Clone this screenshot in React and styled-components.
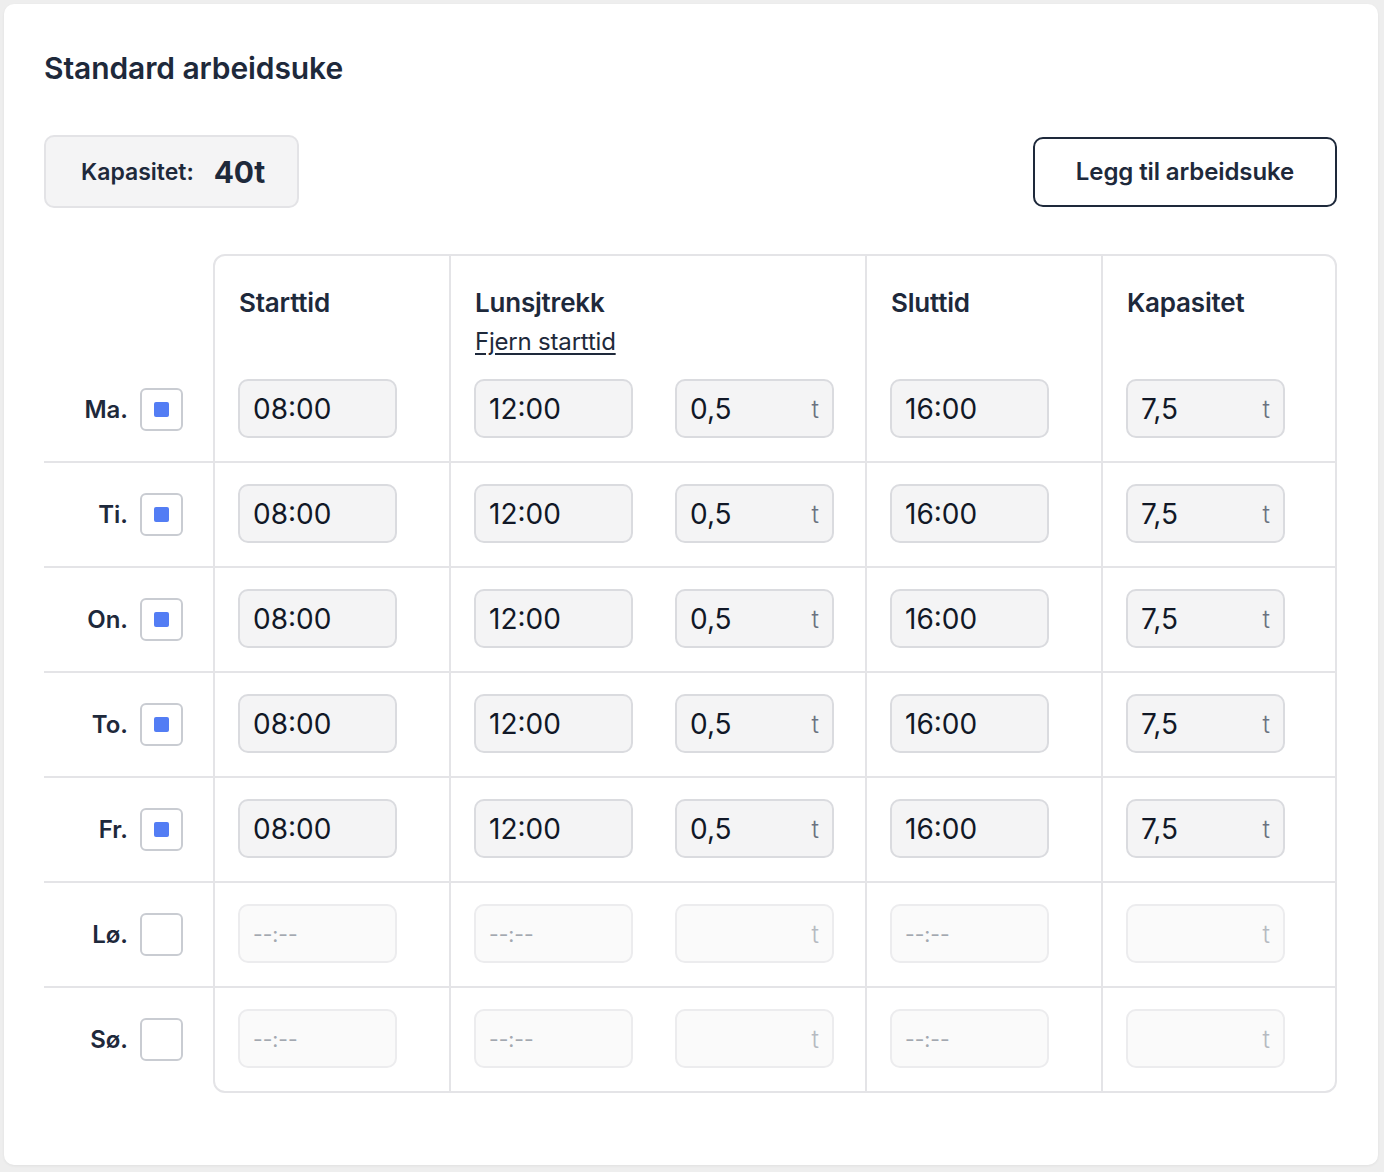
import React from "react";
import styled, { createGlobalStyle } from "styled-components";

const GlobalStyle = createGlobalStyle`
	* {
		box-sizing: border-box;
	}
	body {
		margin: 0;
		background: #eeeeee;
		font-family: Inter, "Liberation Sans", sans-serif;
		color: #1e293b;
	}
`;

const Card = styled.section`
	margin: 4px;
	width: 1374px;
	height: 1161px;
	background: #ffffff;
	border-radius: 10px;
	box-shadow: 0 1px 3px rgba(0, 0, 0, 0.06);
	padding: 47px 41px 0 40px;
`;

const Title = styled.h2`
	margin: 0;
	font-size: 30px;
	line-height: 34px;
	font-weight: 600;
	letter-spacing: -0.1px;
	color: #1e293b;
`;

const Toolbar = styled.div`
	display: flex;
	align-items: center;
	justify-content: space-between;
	margin-top: 50px;
`;

const CapacityBox = styled.div`
	display: flex;
	align-items: center;
	gap: 20px;
	width: 255px;
	height: 73px;
	padding: 0 0 0 35px;
	background: #f4f4f5;
	border: 2px solid #e3e3e6;
	border-radius: 10px;
`;

const CapacityLabel = styled.span`
	font-size: 23px;
	font-weight: 600;
	color: #1e293b;
`;

const CapacityValue = styled.span`
	font-size: 30px;
	font-weight: 700;
	letter-spacing: -0.3px;
	color: #1e293b;
`;

const OutlineButton = styled.button`
	width: 304px;
	height: 70px;
	background: #ffffff;
	border: 2px solid #1e293b;
	border-radius: 10px;
	font-family: inherit;
	font-size: 24px;
	font-weight: 600;
	letter-spacing: -0.1px;
	color: #1e293b;
	cursor: pointer;
`;

const Schedule = styled.div`
	display: flex;
	margin-top: 46px;
`;

const DayColumn = styled.div`
	width: 169px;
	flex-shrink: 0;
	padding-top: 104px;
`;

const DayRow = styled.div`
	display: flex;
	align-items: center;
	justify-content: flex-end;
	gap: 12px;
	height: ${(p) => (p.$last ? "103px" : "105px")};
	padding-right: 30px;
	border-bottom: ${(p) => (p.$last ? "none" : "2px solid #e4e4e7")};
`;

const DayLabel = styled.span`
	font-size: 24px;
	font-weight: 600;
	color: #1e293b;
`;

const Checkbox = styled.span`
	display: flex;
	align-items: center;
	justify-content: center;
	width: 43px;
	height: 43px;
	border: 2px solid #c9ccd2;
	border-radius: 6px;
	background: #ffffff;

	&::after {
		content: "";
		display: ${(p) => (p.$checked ? "block" : "none")};
		width: 15px;
		height: 15px;
		border-radius: 2px;
		background: #537df4;
	}
`;

const Table = styled.div`
	flex: 1;
	display: grid;
	grid-template-columns: 236px 416px 236px 1fr;
	border: 2px solid #e4e4e7;
	border-radius: 12px;
`;

const HeadCell = styled.div`
	height: 102px;
	padding: 32px 23px 0 24px;
	border-right: ${(p) => (p.$last ? "none" : "2px solid #e4e4e7")};
`;

const HeadTitle = styled.div`
	font-size: 26px;
	line-height: 30px;
	font-weight: 600;
	letter-spacing: -0.2px;
	color: #1e293b;
`;

const HeadLink = styled.a`
	display: inline-block;
	margin-top: 10px;
	font-size: 24px;
	line-height: 28px;
	letter-spacing: -0.2px;
	color: #1e293b;
	text-decoration: underline;
	text-underline-offset: 3px;
	cursor: pointer;
`;

const Cell = styled.div`
	display: flex;
	align-items: flex-start;
	gap: 42px;
	height: ${(p) => (p.$lastRow ? "103px" : "105px")};
	padding: 21px 23px 0;
	border-right: ${(p) => (p.$lastCol ? "none" : "2px solid #e4e4e7")};
	border-bottom: ${(p) => (p.$lastRow ? "none" : "2px solid #e4e4e7")};
`;

const Field = styled.div`
	display: flex;
	align-items: center;
	justify-content: space-between;
	width: 159px;
	height: 59px;
	padding: 1px 13px 0 13px;
	border-radius: 10px;
	border: 2px solid ${(p) => (p.$disabled ? "#ececee" : "#dadbdf")};
	background: ${(p) => (p.$disabled ? "#fafafa" : "#f4f4f5")};
`;

const FieldValue = styled.span`
	font-size: 28px;
	color: #111827;
`;

const Placeholder = styled.span`
	font-size: 21px;
	color: #a3a8b0;
`;

const Unit = styled.span`
	margin-left: auto;
	font-size: 25px;
	font-weight: 300;
	color: ${(p) => (p.$disabled ? "#b6bac1" : "#6b7280")};
`;

const days = [
	{ label: "Ma.", on: true },
	{ label: "Ti.", on: true },
	{ label: "On.", on: true },
	{ label: "To.", on: true },
	{ label: "Fr.", on: true },
	{ label: "Lø.", on: false },
	{ label: "Sø.", on: false },
];

const TimeField = ({ value, disabled }) => (
	<Field $disabled={disabled}>{disabled ? <Placeholder>--:--</Placeholder> : <FieldValue>{value}</FieldValue>}</Field>
);

const HoursField = ({ value, disabled }) => (
	<Field $disabled={disabled}>
		{!disabled && <FieldValue>{value}</FieldValue>}
		<Unit $disabled={disabled}>t</Unit>
	</Field>
);

const App = () => {
	return (
		<>
			<GlobalStyle />
			<Card>
				<Title>Standard arbeidsuke</Title>

				<Toolbar>
					<CapacityBox>
						<CapacityLabel>Kapasitet:</CapacityLabel>
						<CapacityValue>40t</CapacityValue>
					</CapacityBox>
					<OutlineButton>Legg til arbeidsuke</OutlineButton>
				</Toolbar>

				<Schedule>
					<DayColumn>
						{days.map((day, i) => (
							<DayRow key={day.label} $last={i === days.length - 1}>
								<DayLabel>{day.label}</DayLabel>
								<Checkbox $checked={day.on} />
							</DayRow>
						))}
					</DayColumn>

					<Table>
						<HeadCell>
							<HeadTitle>Starttid</HeadTitle>
						</HeadCell>
						<HeadCell>
							<HeadTitle>Lunsjtrekk</HeadTitle>
							<HeadLink>Fjern starttid</HeadLink>
						</HeadCell>
						<HeadCell>
							<HeadTitle>Sluttid</HeadTitle>
						</HeadCell>
						<HeadCell $last>
							<HeadTitle>Kapasitet</HeadTitle>
						</HeadCell>

						{days.map((day, i) => {
							const lastRow = i === days.length - 1;
							const off = !day.on;
							return (
								<React.Fragment key={day.label}>
									<Cell $lastRow={lastRow}>
										<TimeField value="08:00" disabled={off} />
									</Cell>
									<Cell $lastRow={lastRow}>
										<TimeField value="12:00" disabled={off} />
										<HoursField value="0,5" disabled={off} />
									</Cell>
									<Cell $lastRow={lastRow}>
										<TimeField value="16:00" disabled={off} />
									</Cell>
									<Cell $lastRow={lastRow} $lastCol>
										<HoursField value="7,5" disabled={off} />
									</Cell>
								</React.Fragment>
							);
						})}
					</Table>
				</Schedule>
			</Card>
		</>
	);
};

export default App;
